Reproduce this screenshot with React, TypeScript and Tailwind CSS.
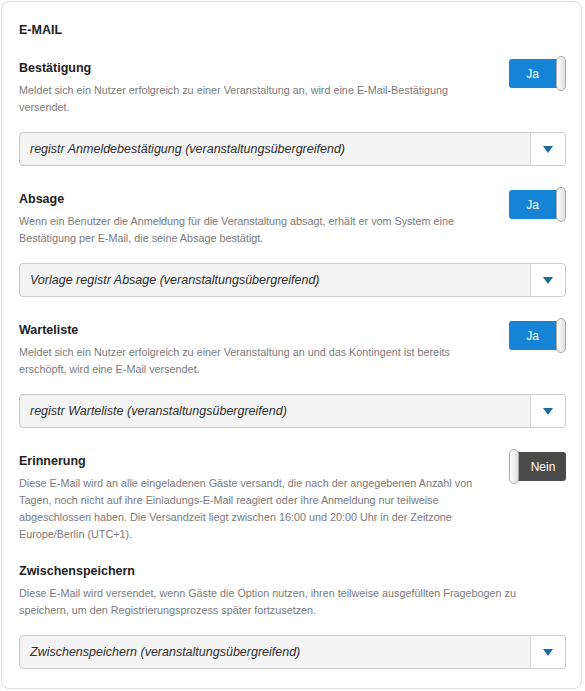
import React from "react";

function Toggle({ on }: { on: boolean }) {
  return (
    <div className="relative w-[57px] h-[35px] -mt-[2px] shrink-0">
      {on ? (
        <>
          <div className="absolute left-0 top-[3px] w-[50px] h-[29px] rounded-l-[3px] bg-[#1583d6] flex items-center justify-center pr-[3px]">
            <span className="text-white text-[12px] leading-none">Ja</span>
          </div>
          <div className="absolute right-0 top-0 w-[10px] h-[35px] rounded-[5px] border border-[#a9a9a9] bg-gradient-to-r from-[#ffffff] to-[#dedede]" />
        </>
      ) : (
        <>
          <div className="absolute right-0 top-[3px] w-[49px] h-[29px] rounded-r-[3px] bg-[#4a4a4a] flex items-center justify-center pl-[3px]">
            <span className="text-white text-[12px] leading-none">Nein</span>
          </div>
          <div className="absolute left-0 top-0 w-[10px] h-[35px] rounded-[5px] border border-[#a9a9a9] bg-gradient-to-r from-[#ffffff] to-[#dedede]" />
        </>
      )}
    </div>
  );
}

function Select({ value }: { value: string }) {
  return (
    <div className="mt-[16px] h-[34px] flex border border-[#cbcbcb] rounded-[4px] bg-[#f4f4f4]">
      <div className="flex-1 flex items-center pl-[10px] italic text-[12.5px] text-[#2e2e2e]">
        {value}
      </div>
      <div className="w-[35px] border-l border-[#d6d6d6] bg-white rounded-r-[4px] flex items-center justify-center">
        <svg width="10" height="7" viewBox="0 0 10 7">
          <polygon points="0,0 10,0 5,7" fill="#1c6a98" />
        </svg>
      </div>
    </div>
  );
}

function Section({
  title,
  desc,
  on,
  select,
  className,
}: {
  title: string;
  desc: string;
  on?: boolean;
  select?: string;
  className?: string;
}) {
  const hasToggle = on !== undefined;
  return (
    <div className={className}>
      <div className="flex items-start justify-between">
        <div className={hasToggle ? "w-[475px]" : "flex-1"}>
          <div className="text-[12.5px] leading-[20px] font-bold text-[#222222]">{title}</div>
          <div className="mt-[4px] text-[10.8px] leading-[17px] text-[#7a7a7a]">{desc}</div>
        </div>
        {hasToggle && <Toggle on={on as boolean} />}
      </div>
      {select && <Select value={select} />}
    </div>
  );
}

export default function App() {
  return (
    <div
      className="w-[585px] h-[691px] bg-white"
      style={{ fontFamily: '"Liberation Sans", Arial, sans-serif' }}
    >
      <div className="ml-px mt-px w-[581px] h-[688px] border border-[#dddddd] rounded-[8px] pl-[17px] pr-[15px] pt-[18px]">
        <div className="text-[12.5px] leading-[20px] font-bold text-[#222222]">E-MAIL</div>
        <Section
          className="mt-[18px]"
          title="Bestätigung"
          desc="Meldet sich ein Nutzer erfolgreich zu einer Veranstaltung an, wird eine E-Mail-Bestätigung versendet."
          on={true}
          select="registr Anmeldebestätigung (veranstaltungsübergreifend)"
        />
        <Section
          className="mt-[23px]"
          title="Absage"
          desc="Wenn ein Benutzer die Anmeldung für die Veranstaltung absagt, erhält er vom System eine Bestätigung per E-Mail, die seine Absage bestätigt."
          on={true}
          select="Vorlage registr Absage (veranstaltungsübergreifend)"
        />
        <Section
          className="mt-[23px]"
          title="Warteliste"
          desc="Meldet sich ein Nutzer erfolgreich zu einer Veranstaltung an und das Kontingent ist bereits erschöpft, wird eine E-Mail versendet."
          on={true}
          select="registr Warteliste (veranstaltungsübergreifend)"
        />
        <Section
          className="mt-[23px]"
          title="Erinnerung"
          desc="Diese E-Mail wird an alle eingeladenen Gäste versandt, die nach der angegebenen Anzahl von Tagen, noch nicht auf ihre Einladungs-E-Mail reagiert oder ihre Anmeldung nur teilweise abgeschlossen haben. Die Versandzeit liegt zwischen 16:00 und 20:00 Uhr in der Zeitzone Europe/Berlin (UTC+1)."
          on={false}
        />
        <Section
          className="mt-[18px]"
          title="Zwischenspeichern"
          desc="Diese E-Mail wird versendet, wenn Gäste die Option nutzen, ihren teilweise ausgefüllten Fragebogen zu speichern, um den Registrierungsprozess später fortzusetzen."
          select="Zwischenspeichern (veranstaltungsübergreifend)"
        />
      </div>
    </div>
  );
}
